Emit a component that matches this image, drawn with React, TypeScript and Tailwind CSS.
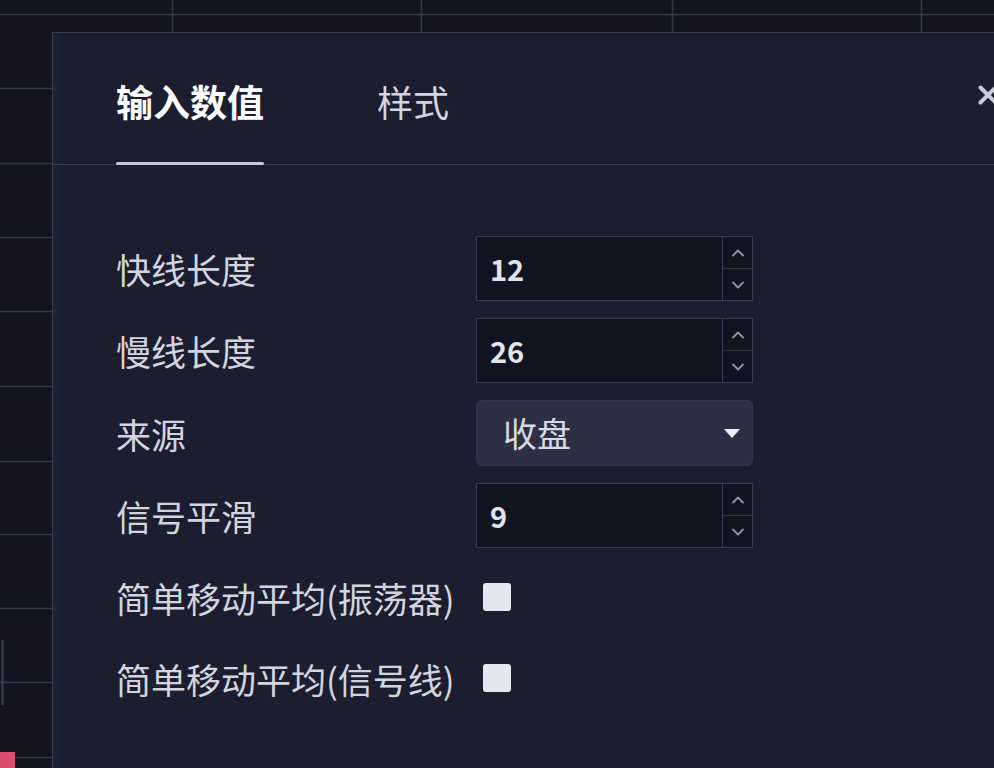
import React, { useState } from 'react';
import { X, ChevronUp, ChevronDown } from 'lucide-react';

const font = { fontFamily: '"Noto Sans CJK SC", "Noto Sans", sans-serif' };

const ChartBackdrop = () => {
  const rows = [88, 163, 237, 311, 386, 461, 534, 608, 682, 757];
  const cols = [172, 421, 672, 921];
  return (
    <svg className="absolute inset-0" width="994" height="768" viewBox="0 0 994 768">
      <rect width="994" height="768" fill="#131420" />
      <line x1="0" y1="14.5" x2="994" y2="14.5" stroke="#353849" strokeWidth="1.5" />
      {rows.map(y => (
        <line key={y} x1="0" y1={y + 0.5} x2="994" y2={y + 0.5} stroke="#353849" strokeWidth="1.5" />
      ))}
      {cols.map(x => (
        <line key={x} x1={x + 0.5} y1="0" x2={x + 0.5} y2="768" stroke="#353849" strokeWidth="1.5" />
      ))}
      <line x1="2.5" y1="640" x2="2.5" y2="705" stroke="#3c4054" strokeWidth="2" />
      <rect x="0" y="752" width="15" height="16" fill="#d6506c" />
    </svg>
  );
};

const NumberField = ({ value }: { value: string }) => (
  <div className="flex h-[65px] w-[277px] border border-[#3a3d52] bg-[#121320]">
    <div className="flex flex-1 items-center pl-[13px] text-[29px] font-semibold text-[#e2e4ec]">{value}</div>
    <div className="flex w-[30px] flex-col border-l border-[#3a3d52]">
      <div className="flex flex-1 items-center justify-center border-b border-[#2c2f42] text-[#9094a8]">
        <ChevronUp size={20} strokeWidth={2.2} />
      </div>
      <div className="flex flex-1 items-center justify-center text-[#9094a8]">
        <ChevronDown size={20} strokeWidth={2.2} />
      </div>
    </div>
  </div>
);

const Label = ({ children }: { children: React.ReactNode }) => (
  <span className="whitespace-nowrap text-[35px] leading-none text-[#d3d5de]">{children}</span>
);

export default function App() {
  const [tab] = useState(0);
  return (
    <div className="relative h-[768px] w-[994px] overflow-hidden bg-[#131420]" style={font}>
      <ChartBackdrop />

      <div className="absolute left-[52px] top-[32px] h-[760px] w-[960px] border-l border-t border-[#3a3d52] bg-[#1c1e2f] shadow-[inset_12px_0_10px_-6px_rgba(30,40,70,0.6)]">
        {/* tabs */}
        <div className="relative flex h-[132px] items-stretch gap-[113px] border-b border-[#3a3d52] px-[63px]">
          <div className="flex flex-col pt-[48px]">
            <span className={`text-[37px] leading-[40px] ${tab === 0 ? 'font-bold text-white' : 'text-[#d3d5de]'}`}>输入数值</span>
            <div className="-mb-px mt-auto h-[3px] rounded-full bg-[#c8cad4]" />
          </div>
          <div className="flex flex-col pt-[48px]">
            <span className="text-[36px] leading-[40px] text-[#d3d5de]">样式</span>
          </div>
          <button className="absolute left-[920px] top-[47px] text-[#c9cbd6]">
            <X size={30} strokeWidth={3.2} />
          </button>
        </div>

        {/* inputs */}
        <div className="grid grid-cols-[360px_277px] items-center gap-y-[17px] px-[63px] pt-[71px]">
          <Label>快线长度</Label>
          <NumberField value="12" />

          <Label>慢线长度</Label>
          <NumberField value="26" />

          <Label>来源</Label>
          <div className="flex h-[66px] items-center justify-between rounded-md border border-[#34374b] bg-[#2d3044] pl-[26px] pr-[12px]">
            <span className="text-[34px] leading-none text-[#d8dae2]">收盘</span>
            <svg width="16" height="9" viewBox="0 0 16 9">
              <path d="M0 0 H16 L8 9 Z" fill="#eceef4" />
            </svg>
          </div>

          <Label>信号平滑</Label>
          <NumberField value="9" />

          <div className="flex h-[64px] items-center">
            <Label>简单移动平均(振荡器)</Label>
          </div>
          <div className="ml-[7px] h-[28px] w-[28px] rounded-[3px] bg-[#e6e7ef]" />

          <div className="flex h-[64px] items-center">
            <Label>简单移动平均(信号线)</Label>
          </div>
          <div className="ml-[7px] h-[28px] w-[28px] rounded-[3px] bg-[#e6e7ef]" />
        </div>
      </div>
    </div>
  );
}
